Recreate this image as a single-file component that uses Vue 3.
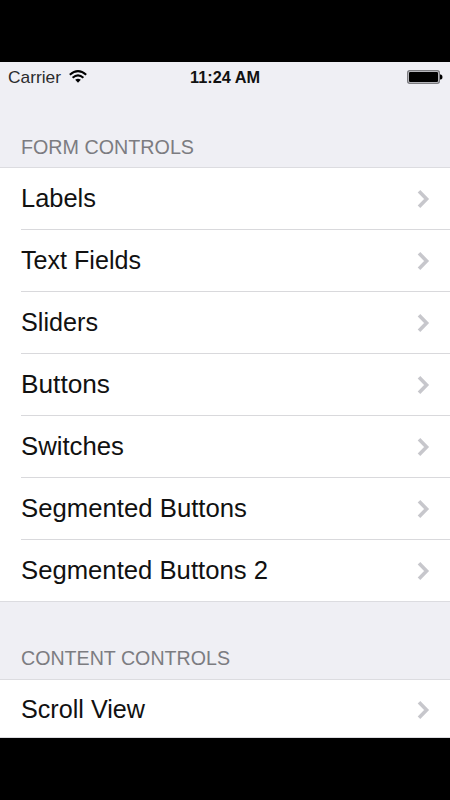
<script setup>
const formControls = [
  { name: 'Labels', width: 75 },
  { name: 'Text Fields', width: 120 },
  { name: 'Sliders', width: 77 },
  { name: 'Buttons', width: 89 },
  { name: 'Switches', width: 103 },
  { name: 'Segmented Buttons', width: 226 },
  { name: 'Segmented Buttons 2', width: 247 }
]
const groups = [
  { title: 'FORM CONTROLS', width: 173, items: formControls },
  { title: 'CONTENT CONTROLS', width: 209, items: [{ name: 'Scroll View', width: 124 }] }
]
</script>

<template>
  <main class="screen">
    <div class="phone">
      <header class="status">
        <div class="carrier">
          <svg width="54" height="24"><text x="0" y="18" textLength="53" lengthAdjust="spacingAndGlyphs">Carrier</text></svg>
          <svg class="wifi" width="18" height="13" viewBox="0 0 18 13">
            <path d="M.8 4.8Q9-2.6 17.2 4.8M3.6 7.8Q9 3 14.4 7.8" fill="none" stroke="#000" stroke-width="2" />
            <path d="M6.2 9.7Q9 7.7 11.8 9.7L9 12.7Z" />
          </svg>
        </div>
        <svg class="clock" width="74" height="24"><text x="2" y="18" textLength="70" lengthAdjust="spacingAndGlyphs">11:24 AM</text></svg>
        <div class="power">
          <svg width="36" height="14" viewBox="0 0 36 14">
            <rect x=".75" y=".75" width="31.5" height="12.5" rx="2" fill="none" stroke="#7c7c80" stroke-width="1.5" />
            <rect x="2" y="2" width="29" height="10" rx="1" />
            <path d="M33 4.5H34Q35.5 5 35.5 7T34 9.5H33Z" />
          </svg>
        </div>
      </header>
      <section v-for="group in groups" :key="group.title">
        <h2><svg width="240" height="28"><text x="0" y="21" :textLength="group.width" lengthAdjust="spacingAndGlyphs">{{ group.title }}</text></svg></h2>
        <ul>
          <li v-for="item in group.items" :key="item.name">
            <div class="row">
              <svg width="300" height="38"><text x="0" y="27" :textLength="item.width" lengthAdjust="spacingAndGlyphs">{{ item.name }}</text></svg>
              <svg class="chevron" width="13" height="20" viewBox="0 0 13 20"><path d="M2 2.2L9.6 10L2 17.8" /></svg>
            </div>
          </li>
        </ul>
      </section>
    </div>
  </main>
</template>

<style>
body { margin: 0; background: #000; }
</style>
<style scoped>
.screen { width: 450px; height: 800px; padding: 62px 0; box-sizing: border-box; background: #000; font-family: "Liberation Sans", Arial, sans-serif; }
.phone { height: 676px; overflow: hidden; background: #efeff4; }
svg { display: block; flex: none; fill: currentColor; }
.status { height: 28px; display: grid; grid-template-columns: 1fr 74px 1fr; align-items: center; padding: 1px 7px 0 8px; box-sizing: border-box; font-size: 17px; color: #111; }
.carrier { display: flex; align-items: center; gap: 7px; color: #2b2b2d; }
.wifi { color: #000; }
.clock { font-weight: bold; margin-left: -1px; }
.power { display: flex; justify-content: flex-end; color: #000; }
h2 { height: 77px; margin: 0; padding: 0 21px 6px; box-sizing: border-box; display: flex; align-items: flex-end; color: #7c7c81; font-size: 20px; font-weight: normal; }
ul { margin: 0; padding: 0; list-style: none; background: #fff; border: solid #dcdce0; border-width: 1px 0; color: #111; }
li { height: 62px; padding-left: 21px; }
.row { height: 62px; box-sizing: border-box; padding-right: 20px; border-bottom: 1px solid #d9d9dc; display: flex; align-items: center; justify-content: space-between; font-size: 26px; }
li:last-child, li:last-child .row { height: 61px; border-bottom: 0; }
section:last-child h2 { padding-bottom: 7px; }
section:last-child li, section:last-child .row { height: 57px; }
section:last-child .row { padding-top: 2px; }
.chevron path { fill: none; stroke: #c7c7cc; stroke-width: 3.6; }
</style>
